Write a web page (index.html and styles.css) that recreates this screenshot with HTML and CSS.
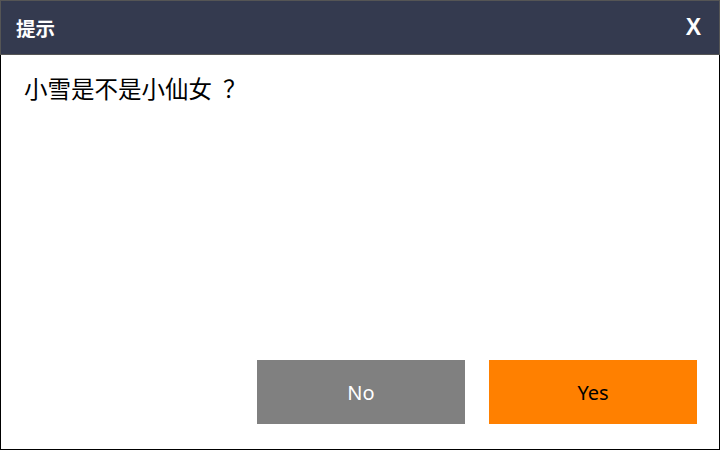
FILE: index.html
```html
<!DOCTYPE html>
<html lang="zh-CN">
<head>
<meta charset="utf-8">
<link rel="stylesheet" href="styles.css">
</head>
<body>
<div class="dialog">
  <div class="titlebar">
    <span class="title">提示</span>
    <span class="close">X</span>
  </div>
  <div class="content">
    <p class="message">小雪是不是小仙女<span class="qmark">？</span></p>
  </div>
  <div class="actions">
    <button class="btn btn-no">No</button>
    <button class="btn btn-yes">Yes</button>
  </div>
</div>
</body>
</html>
```
FILE: styles.css
```css
html, body {
  margin: 0;
  padding: 0;
  background: #fff;
}
.dialog {
  box-sizing: border-box;
  width: 720px;
  height: 450px;
  border: 1px solid #000;
  border-top: none;
  display: flex;
  flex-direction: column;
  font-family: "Noto Sans CJK SC", "Noto Sans", sans-serif;
}
.titlebar {
  box-sizing: border-box;
  height: 55px;
  margin: 0 -1px;
  background: #343a4f;
  border: 1px solid #555;
  display: flex;
  align-items: center;
  justify-content: space-between;
  padding: 0 18px 0 15px;
  color: #fff;
}
.title {
  font-size: 19.5px;
  font-weight: bold;
  line-height: 1;
}
.close {
  font-family: "Liberation Sans", Arial, sans-serif;
  font-weight: bold;
  font-size: 23px;
  line-height: 1;
}
.content {
  flex: 1;
  padding: 19px 23px;
}
.message {
  margin: 0;
  font-size: 23.5px;
  line-height: 28px;
  color: #000;
}
.qmark {
  padding-left: 11px;
}
.actions {
  display: flex;
  justify-content: flex-end;
  gap: 24px;
  padding: 0 22px 25px 0;
}
.btn {
  width: 208px;
  height: 64px;
  border: none;
  font-family: "Noto Sans", "Open Sans", sans-serif;
  font-size: 20px;
  padding: 0;
}
.btn-no {
  background: #808080;
  color: #fff;
}
.btn-yes {
  background: #ff8000;
  color: #000;
}
```
